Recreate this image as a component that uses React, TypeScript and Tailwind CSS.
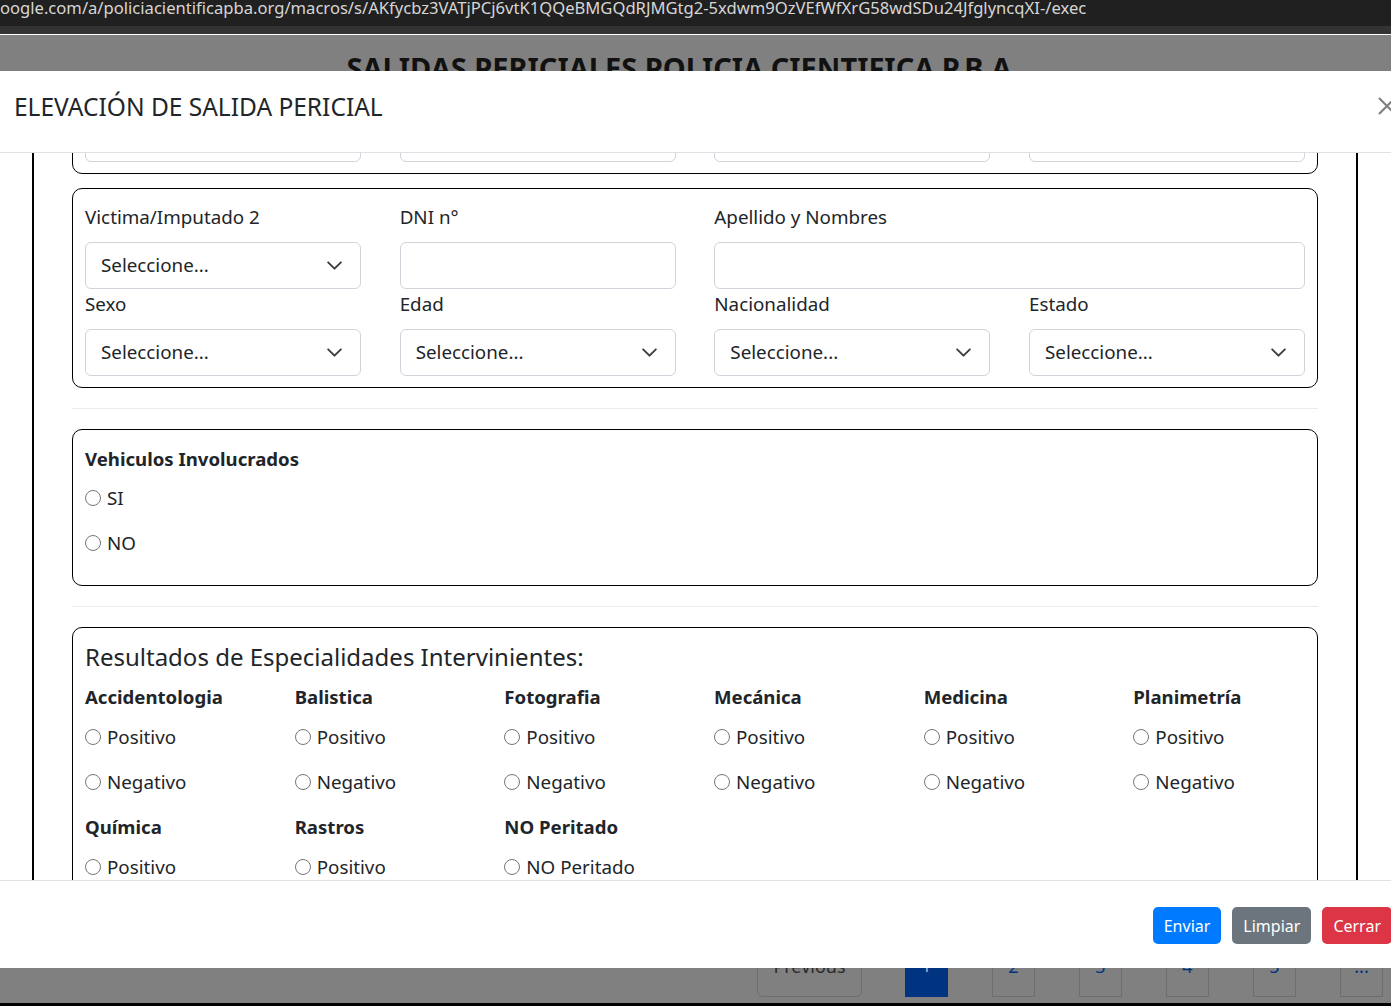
import React from "react";

const FONT = { fontFamily: '"Noto Sans", "Open Sans", Arial, sans-serif' };

function Chevron() {
  return (
    <svg width="17" height="17" viewBox="0 0 16 16" className="shrink-0">
      <path d="M2 5l6 6 6-6" fill="none" stroke="#343a40" strokeWidth="1.7" strokeLinecap="round" strokeLinejoin="round" />
    </svg>
  );
}

function Select() {
  return (
    <div className="h-[47px] border border-[#ced4da] rounded-[6px] bg-white flex items-center justify-between pl-[15px] pr-[17px] text-[18.8px] text-[#212529]">
      <span>Seleccione...</span>
      <Chevron />
    </div>
  );
}

function Input() {
  return <div className="h-[47px] border border-[#ced4da] rounded-[6px] bg-white" />;
}

function Field({ label, children, span2 }: { label: string; children: React.ReactNode; span2?: boolean }) {
  return (
    <div className={span2 ? "col-span-2" : ""}>
      <div className="text-[18.8px] leading-[30px] mb-[10px] text-[#212529]">{label}</div>
      {children}
    </div>
  );
}

function Radio({ label }: { label: string }) {
  return (
    <div className="flex items-center h-[30px] mb-[15px] text-[18.8px] text-[#212529]">
      <span className="w-[16px] h-[16px] rounded-full border border-[#767676] bg-white mr-[6px] shrink-0" />
      <span>{label}</span>
    </div>
  );
}

function Victim({ n }: { n: number }) {
  return (
    <div className="border border-black rounded-[10px] px-[12px] pt-[13px] pb-[11px]">
      <div className="grid grid-cols-4 gap-x-[38.67px]">
        <Field label={`Victima/Imputado ${n}`}><Select /></Field>
        <Field label="DNI n°"><Input /></Field>
        <Field label="Apellido y Nombres" span2><Input /></Field>
        <Field label="Sexo"><Select /></Field>
        <Field label="Edad"><Select /></Field>
        <Field label="Nacionalidad"><Select /></Field>
        <Field label="Estado"><Select /></Field>
      </div>
    </div>
  );
}

function Specialty({ title, options }: { title: string; options: string[] }) {
  return (
    <div>
      <div className="text-[18.6px] leading-[30px] font-bold mb-[10px] text-[#212529]">{title}</div>
      {options.map((o) => (
        <Radio key={o} label={o} />
      ))}
    </div>
  );
}

function PageBox({ children, active }: { children: React.ReactNode; active?: boolean }) {
  return (
    <div
      className={
        active
          ? "w-[43px] h-[60px] bg-[#003380] text-[#9fb0cc] text-center pt-[18px] leading-[20px]"
          : "ml-[44px] w-[43px] h-[60px] border border-[#6e6e6e] text-[#003380] text-center pt-[18px] leading-[20px]"
      }
    >
      {children}
    </div>
  );
}

export default function App() {
  const pn = ["Positivo", "Negativo"];
  return (
    <div className="relative w-[1391px] h-[1006px] overflow-hidden bg-black" style={FONT}>
      {/* browser url bar */}
      <div className="h-[26px] bg-[#202020] text-[#d6d6d6] text-[16.6px] leading-[15px] whitespace-nowrap overflow-hidden">
        oogle.com/a/policiacientificapba.org/macros/s/AKfycbz3VATjPCj6vtK1QQeBMGQdRJMGtg2-5xdwm9OzVEfWfXrG58wdSDu24JfglyncqXI-/exec
      </div>
      <div className="h-[8px] bg-[#333333]" />
      <div className="h-[1px] bg-white" />

      {/* page behind backdrop */}
      <div className="relative h-[968px] overflow-hidden bg-[#808080]">
        <div className="w-[1358px] text-center pt-[15px] text-[29px] leading-[36px] font-bold text-[#111]">
          SALIDAS PERICIALES POLICIA CIENTIFICA P.B.A
        </div>
        <div className="flex items-start mt-[851px] pl-[757px] gap-[43px] text-[18px]">
          <div className="w-[105px] h-[60px] border border-[#6e6e6e] rounded-[6px] text-[#2a2a2a] text-center pt-[18px] leading-[20px]">Previous</div>
          <div className="flex">
            <PageBox active>1</PageBox>
            {["2", "3", "4", "5", "..."].map((t) => (
              <PageBox key={t}>{t}</PageBox>
            ))}
          </div>
        </div>

        {/* modal */}
        <div className="absolute top-[36px] left-0 w-[1410px] h-[897px] bg-white flex flex-col">
          <div className="h-[82px] shrink-0 border-b border-[#dee2e6] flex items-center justify-between pl-[14px] pr-[13px] pb-[8px]">
            <div className="text-[24.5px] text-[#212529]">ELEVACIÓN DE SALIDA PERICIAL</div>
            <svg width="20" height="20" viewBox="0 0 20 20" className="mb-[4px]">
              <path d="M2 2L18 18M18 2L2 18" stroke="#808080" strokeWidth="2.2" />
            </svg>
          </div>

          <div className="flex-1 overflow-hidden">
            <div className="ml-[32px] w-[1326px] h-full border-x-2 border-black overflow-hidden">
              <div className="px-[38px] -mt-[179px]">
                <Victim n={1} />
                <div className="h-[14px]" />
                <Victim n={2} />
                <div className="my-[20px] h-[1px] bg-[#e9ecef]" />
                <div className="border border-black rounded-[10px] px-[12px] pt-[14px] pb-[12px] text-[#212529]">
                  <div className="text-[18.6px] leading-[30px] font-bold mb-[9px]">Vehiculos Involucrados</div>
                  <Radio label="SI" />
                  <Radio label="NO" />
                </div>
                <div className="my-[20px] h-[1px] bg-[#e9ecef]" />
                <div className="border border-black rounded-[10px] px-[12px] pt-[14px] pb-[12px] text-[#212529]">
                  <div className="text-[24px] leading-[30px] mb-[10px]">Resultados de Especialidades Intervinientes:</div>
                  <div className="grid grid-cols-6 gap-x-[38px]">
                    <Specialty title="Accidentologia" options={pn} />
                    <Specialty title="Balistica" options={pn} />
                    <Specialty title="Fotografia" options={pn} />
                    <Specialty title="Mecánica" options={pn} />
                    <Specialty title="Medicina" options={pn} />
                    <Specialty title="Planimetría" options={pn} />
                    <Specialty title="Química" options={pn} />
                    <Specialty title="Rastros" options={pn} />
                    <Specialty title="NO Peritado" options={["NO Peritado"]} />
                  </div>
                </div>
              </div>
            </div>
          </div>

          <div className="h-[88px] shrink-0 border-t border-[#dee2e6] flex items-center justify-end pr-[18px] gap-[11px] pt-[2px]">
            <div className="h-[37px] px-[11px] rounded-[5px] bg-[#007bff] text-white text-[16px] flex items-center">Enviar</div>
            <div className="h-[37px] px-[11px] rounded-[5px] bg-[#6c757d] text-white text-[16px] flex items-center">Limpiar</div>
            <div className="h-[37px] px-[11px] rounded-[5px] bg-[#dc3545] text-white text-[16px] flex items-center">Cerrar</div>
          </div>
        </div>
      </div>
      <div className="h-[3px] bg-black" />
    </div>
  );
}
